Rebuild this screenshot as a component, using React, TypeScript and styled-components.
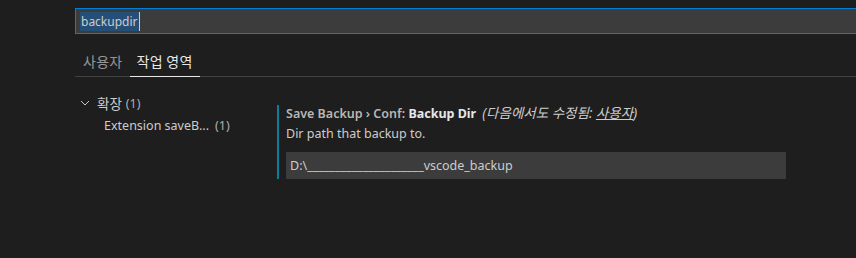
import React from 'react';
import styled, { createGlobalStyle } from 'styled-components';

const GlobalStyle = createGlobalStyle`
  html, body {
    margin: 0;
    padding: 0;
    background: #1e1e1e;
    overflow: hidden;
  }
  body {
    font-family: 'Noto Sans', 'Noto Sans CJK KR', sans-serif;
    color: #cccccc;
    font-size: 12.5px;
  }
`;

const Page = styled.div`
  width: 856px;
  height: 258px;
  padding: 8px 0 0 75px;
  box-sizing: border-box;
  overflow: hidden;
`;

const SearchBox = styled.div`
  height: 26px;
  margin-right: -20px;
  box-sizing: border-box;
  border: 1px solid #007fd4;
  background: #3c3c3c;
  display: flex;
  align-items: center;
  padding-left: 4px;
  font-size: 12px;
  color: #cccccc;
`;

const Selected = styled.span`
  background: #264f78;
  line-height: 19px;
  padding: 0 1px;
`;

const Caret = styled.span`
  width: 1px;
  height: 19px;
  background: #cccccc;
`;

const TabBar = styled.div`
  display: flex;
  margin-top: 12px;
  margin-right: -20px;
  border-bottom: 1px solid #414141;
`;

const Tab = styled.div<{ $active?: boolean }>`
  height: 30px;
  line-height: 30px;
  padding: 0 7px;
  margin-bottom: -1px;
  font-family: 'Noto Sans CJK KR', sans-serif;
  font-size: 14px;
  letter-spacing: 0.3px;
  color: ${(p) => (p.$active ? '#e7e7e7' : 'rgba(231, 231, 231, 0.6)')};
  border-bottom: 1px solid ${(p) => (p.$active ? '#e7e7e7' : 'transparent')};
  &:first-child {
    margin-left: 1px;
  }
`;

const Body = styled.div`
  display: flex;
  margin-top: 15px;
`;

const Toc = styled.div`
  width: 202px;
  flex-shrink: 0;
`;

const TocRow = styled.div<{ $depth: number }>`
  height: 22px;
  display: flex;
  align-items: center;
  padding-left: ${(p) => (p.$depth === 0 ? 5 : 29)}px;
  color: #cccccc;
  white-space: nowrap;
`;

const Hangul = styled.span`
  font-size: 13.5px;
`;

const Count = styled.span<{ $gap: number }>`
  margin-left: ${(p) => p.$gap}px;
  color: rgba(204, 204, 204, 0.85);
`;

const Chevron = styled.svg`
  width: 10px;
  height: 10px;
  margin-right: 7px;
`;

const Setting = styled.div`
  margin-top: 13px;
  width: 510px;
  border-left: 2px solid #0c7d9d;
  padding-left: 7px;
`;

const Title = styled.div`
  line-height: 16px;
  white-space: nowrap;
`;

const Category = styled.span`
  font-weight: 600;
  color: rgba(204, 204, 204, 0.9);
`;

const Label = styled.span`
  font-weight: 700;
  color: #e7e7e7;
`;

const Modified = styled.span`
  font-style: italic;
  margin-left: 6px;
  font-size: 13.5px;
  color: #cccccc;
`;

const Link = styled.span`
  text-decoration: underline;
`;

const Description = styled.div`
  line-height: 18px;
  margin-top: 3px;
`;

const ValueBox = styled.div`
  margin-top: 9px;
  height: 27px;
  width: 500px;
  background: #3c3c3c;
  display: flex;
  align-items: center;
  padding-left: 4px;
  box-sizing: border-box;
  color: #cccccc;
`;

export default function App(): React.ReactElement {
  return (
    <>
      <GlobalStyle />
      <Page>
        <SearchBox>
          <Selected>backupdir</Selected>
          <Caret />
        </SearchBox>
        <TabBar>
          <Tab>사용자</Tab>
          <Tab $active>작업 영역</Tab>
        </TabBar>
        <Body>
          <Toc>
            <TocRow $depth={0}>
              <Chevron viewBox="0 0 10 10">
                <polyline points="1,3 5,7 9,3" fill="none" stroke="#c5c5c5" strokeWidth="1" />
              </Chevron>
              <Hangul>확장</Hangul>
              <Count $gap={4}>(1)</Count>
            </TocRow>
            <TocRow $depth={1}>
              Extension saveB...
              <Count $gap={6}>(1)</Count>
            </TocRow>
          </Toc>
          <Setting>
            <Title>
              <Category>Save Backup › Conf: </Category>
              <Label>Backup Dir</Label>
              <Modified>
                (다음에서도 수정됨: <Link>사용자</Link>)
              </Modified>
            </Title>
            <Description>Dir path that backup to.</Description>
            <ValueBox>D:\_____________________vscode_backup</ValueBox>
          </Setting>
        </Body>
      </Page>
    </>
  );
}
